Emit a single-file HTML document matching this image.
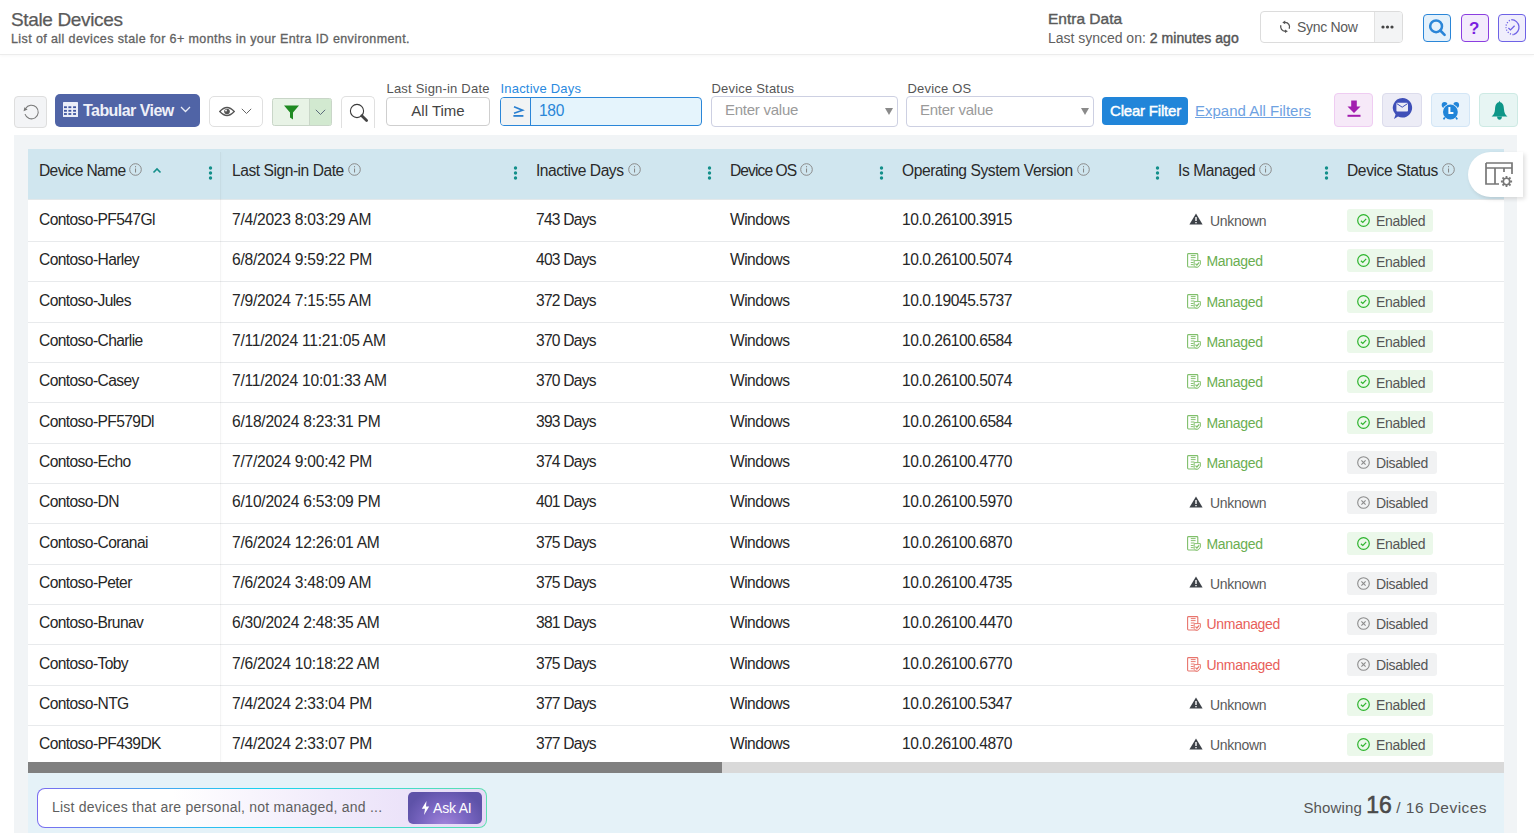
<!DOCTYPE html>
<html><head><meta charset="utf-8">
<style>
*{box-sizing:border-box;}
html,body{margin:0;padding:0;}
body{width:1534px;height:833px;overflow:hidden;position:relative;background:#fff;font-family:"Liberation Sans",sans-serif;color:#333;}
.abs{position:absolute;}
/* header */
#hdr{position:absolute;left:0;top:0;width:1534px;height:55px;background:#fff;border-bottom:1px solid #ececec;box-shadow:0 1px 3px rgba(0,0,0,0.035);}
#title{position:absolute;left:11px;top:9px;font-size:19px;color:#5a5a5a;letter-spacing:-0.35px;-webkit-text-stroke:0.25px #5a5a5a;white-space:nowrap;}
#sub{position:absolute;left:11px;top:31.5px;font-size:12.5px;color:#626262;letter-spacing:0.4px;-webkit-text-stroke:0.3px #626262;white-space:nowrap;}
#entra{position:absolute;left:1048px;top:9.5px;font-size:15.5px;color:#5a5a5a;-webkit-text-stroke:0.4px #5a5a5a;white-space:nowrap;}
#synced{position:absolute;left:1048px;top:29.5px;font-size:14px;color:#606060;white-space:nowrap;letter-spacing:-0.02px;}
#synced b{font-weight:normal;color:#555;-webkit-text-stroke:0.4px #555;letter-spacing:0.1px;}
#sync{position:absolute;left:1260px;top:11px;width:143px;height:32px;border:1px solid #dcdcdc;border-radius:4px;background:#fff;overflow:hidden;}
#sync .lbl{position:absolute;left:36px;top:7px;font-size:14px;color:#5a5a5a;letter-spacing:-0.3px;}
#sync .more{position:absolute;left:113px;top:0;width:28px;height:30px;background:#f3f4f5;border-left:1px solid #e2e2e2;}
.hbtn{position:absolute;top:14px;width:28px;height:28px;border-radius:4px;}
/* toolbar */
.tb{position:absolute;}
.flabel{position:absolute;top:80.5px;font-size:13px;color:#555;white-space:nowrap;letter-spacing:0.2px;margin-left:0.5px;}
/* container */
#cont{position:absolute;left:14px;top:135px;width:1503px;height:698px;background:#f1f4f6;}
#thead{position:absolute;left:28px;top:149px;width:1476px;height:51px;background:#d0e6ef;border-bottom:1px solid #e3e8ea;}
.hc{position:absolute;top:157.5px;height:24px;display:flex;align-items:center;white-space:nowrap;}
.ht{font-size:15.6px;color:#2a2a2a;position:relative;top:1.5px;}
.info{margin-left:4px;position:relative;top:-0.5px;}
.sort{margin-left:9.5px;position:relative;top:0.5px;}
.keb{position:absolute;top:165.8px;height:14px;}
#tbody{position:absolute;left:28px;top:200px;width:1476px;height:562px;background:#fff;overflow:hidden;}
.row{position:absolute;left:0;width:1476px;height:40.33px;border-bottom:1px solid #e8eaec;}
.c{position:absolute;top:9.2px;font-size:15.6px;color:#262626;white-space:nowrap;}
.man{position:absolute;top:11.3px;display:flex;align-items:center;white-space:nowrap;font-size:14px;letter-spacing:-0.3px;}
.man span{margin-left:4.5px;}
.unk{color:#5a5a5a;}
.unk span{margin-left:7px;}
.mgd{color:#6aae50;}
.mgd svg,.umg svg{margin-top:-1px;}
.umg{color:#e8605a;}
.badge{position:absolute;top:7.3px;height:23px;border-radius:3px;display:flex;align-items:center;padding-left:10px;font-size:14px;color:#555;white-space:nowrap;letter-spacing:-0.3px;}
.badge span{margin-left:6px;margin-top:1.4px;}
.en{background:#ebf8ea;width:86px;}
.dis{background:#f1f2f3;width:90px;}
#col1shadow{position:absolute;left:220px;top:152px;width:1px;height:610px;background:rgba(0,0,0,0.045);box-shadow:1px 0 3px rgba(0,0,0,0.03);}
#sbar{position:absolute;left:28px;top:762px;width:1476px;height:11px;background:#d9d9d9;}
#sthumb{position:absolute;left:0;top:0;width:694px;height:11px;background:#808080;}
#foot{position:absolute;left:28px;top:773px;width:1476px;height:60px;background:#e5f2f8;}
</style></head>
<body>
<div id="hdr">
  <div id="title">Stale Devices</div>
  <div id="sub">List of all devices stale for 6+ months in your Entra ID environment.</div>
  <div id="entra">Entra Data</div>
  <div id="synced">Last synced on: <b>2 minutes ago</b></div>
  <div id="sync">
    <svg class="abs" style="left:18px;top:8px" width="13" height="14" viewBox="0 0 13 14"><path d="M5.9 2.35 A4.5 4.5 0 0 1 10.2 8.7" fill="none" stroke="#555" stroke-width="1.35"/><path d="M3.3 2.4 L6.2 0.6 L6.2 4.2 Z" fill="#555"/><path d="M1.87 5.26 A4.5 4.5 0 0 0 6.3 11.25" fill="none" stroke="#555" stroke-width="1.35"/><path d="M8.9 11.2 L6 9.4 L6 13 Z" fill="#555"/></svg>
    <div class="lbl">Sync Now</div>
    <div class="more"><svg class="abs" style="left:6px;top:13px" width="13" height="4" viewBox="0 0 13 4"><circle cx="2" cy="2" r="1.6" fill="#444"/><circle cx="6.5" cy="2" r="1.6" fill="#444"/><circle cx="11" cy="2" r="1.6" fill="#444"/></svg></div>
  </div>
  <div class="hbtn" style="left:1423px;border:1.5px solid #2a86d8;background:#e4f1fb;">
    <svg class="abs" style="left:5px;top:4px" width="18" height="19" viewBox="0 0 18 19"><circle cx="7.1" cy="7.3" r="5.9" fill="none" stroke="#2a86d8" stroke-width="2.5"/><path d="M11.3 11.5 L15.6 15.8" stroke="#2a86d8" stroke-width="2.6" stroke-linecap="round"/></svg>
  </div>
  <div class="hbtn" style="left:1461px;border:1.5px solid #8b3ee0;background:#f3ebfc;">
    <div class="abs" style="left:7px;top:3.5px;font-size:17px;font-weight:bold;color:#7a1fe0;">?</div>
  </div>
  <div class="hbtn" style="left:1498px;border:1.5px solid #6e62e6;background:#f0eefc;">
    <svg class="abs" style="left:4px;top:4px" width="18" height="18" viewBox="0 0 18 18"><path d="M8.5 0.7 A7.6 7.6 0 0 1 10.5 15.6" fill="none" stroke="#6e62e6" stroke-width="1.3"/><path d="M10.5 15.6 A7.6 7.6 0 0 1 8.5 0.7" fill="none" stroke="#6e62e6" stroke-width="1.3" stroke-dasharray="1.1 1.5"/><path d="M5.4 9 L7.5 10.9 L11.6 6.8" fill="none" stroke="#6e62e6" stroke-width="1.3"/></svg>
  </div>
</div>

<!-- toolbar -->
<div class="tb" style="left:14px;top:96px;width:33px;height:32px;border:1px solid #dedede;border-radius:4px;background:#f3f4f6;">
  <svg class="abs" style="left:7px;top:6px" width="18" height="18" viewBox="0 0 18 18"><path d="M3.6 5.6 A6.8 6.8 0 1 1 3 11.2" fill="none" stroke="#777" stroke-width="1.05"/><path d="M1.6 8.2 L2.4 4.2 L5.6 6.6 Z" fill="#777"/></svg>
</div>
<div class="tb" style="left:55px;top:94px;width:145px;height:33px;border-radius:5px;background:#5064a6;">
  <svg class="abs" style="left:8px;top:8px" width="15" height="15" viewBox="0 0 15 15"><rect x="0" y="0" width="15" height="15" rx="0.6" fill="#eaedf8"/><rect x="1.0" y="4.3" width="2.9" height="1.8" fill="#3f55a0"/><rect x="5.4" y="4.3" width="2.9" height="1.8" fill="#3f55a0"/><rect x="10.1" y="4.3" width="2.9" height="1.8" fill="#3f55a0"/><rect x="1.0" y="7.9" width="2.9" height="1.8" fill="#3f55a0"/><rect x="5.4" y="7.9" width="2.9" height="1.8" fill="#3f55a0"/><rect x="10.1" y="7.9" width="2.9" height="1.8" fill="#3f55a0"/><rect x="1.0" y="11.1" width="2.9" height="1.8" fill="#3f55a0"/><rect x="5.4" y="11.1" width="2.9" height="1.8" fill="#3f55a0"/><rect x="10.1" y="11.1" width="2.9" height="1.8" fill="#3f55a0"/></svg>
  <div class="abs" style="left:28px;top:8px;font-size:16px;font-weight:bold;color:#eef0f8;white-space:nowrap;letter-spacing:-0.55px;">Tabular View</div>
  <svg class="abs" style="left:125px;top:12px" width="11" height="7" viewBox="0 0 11 7"><path d="M1 1 L5.5 5.5 L10 1" fill="none" stroke="#e8ecf6" stroke-width="1.3"/></svg>
</div>
<div class="tb" style="left:209px;top:96px;width:54px;height:31px;border:1px solid #e0e0e0;border-radius:5px;background:#fff;">
  <svg class="abs" style="left:9px;top:9px" width="16" height="11" viewBox="0 0 16 11"><path d="M0.8 5.5 Q8 -2.5 15.2 5.5 Q8 13.5 0.8 5.5 Z" fill="none" stroke="#555" stroke-width="1.4"/><circle cx="8" cy="5.5" r="2.8" fill="#555"/><circle cx="7" cy="4.5" r="0.9" fill="#fff"/></svg>
  <svg class="abs" style="left:30.5px;top:11px" width="11" height="7" viewBox="0 0 11 7"><path d="M0.8 0.8 L5.5 5.5 L10.2 0.8" fill="none" stroke="#666" stroke-width="1"/></svg>
</div>
<div class="tb" style="left:272px;top:98px;width:60px;height:28px;border:1px solid #c9d6c8;border-radius:2.5px;background:#e8f3e6;overflow:hidden;">
  <div class="abs" style="left:36px;top:0;width:24px;height:28px;background:#d2e9d0;border-left:1px solid #c9d6c8;"></div>
  <svg class="abs" style="left:11px;top:6px" width="15" height="15" viewBox="0 0 15 15"><path d="M0 0.5 H15 L9 7.5 V14.5 L6 12.5 V7.5 Z" fill="#1f8a22"/></svg>
  <svg class="abs" style="left:42px;top:9.5px" width="11" height="7" viewBox="0 0 11 7"><path d="M0.8 0.8 L5.5 5.5 L10.2 0.8" fill="none" stroke="#5a6a7a" stroke-width="1"/></svg>
</div>
<div class="tb" style="left:341px;top:96px;width:34px;height:32px;border:1px solid #e0e0e0;border-bottom:none;border-radius:5px 5px 0 0;background:#fff;">
  <svg class="abs" style="left:6px;top:5px" width="22" height="22" viewBox="0 0 22 22"><circle cx="9" cy="9" r="6.6" fill="none" stroke="#3a3a3a" stroke-width="1.1"/><path d="M13.8 13.8 L18.6 18.6" stroke="#444" stroke-width="2.8" stroke-linecap="round"/></svg>
</div>

<div class="flabel" style="left:386px;">Last Sign-in Date</div>
<div class="tb" style="left:386px;top:97px;width:104px;height:29px;border:1px solid #cfcfcf;border-radius:4px;background:#fff;">
  <div class="abs" style="left:0;width:102px;top:4px;text-align:center;font-size:15px;color:#444;">All Time</div>
</div>
<div class="flabel" style="left:500px;color:#2a8ae0;">Inactive Days</div>
<div class="tb" style="left:500px;top:97px;width:202px;height:29px;border:1px solid #2a86d8;border-radius:4px;background:#e5f4fc;overflow:hidden;">
  <div class="abs" style="left:0;top:0;width:30px;height:27px;background:#f1f3f4;border-right:1px solid #2a86d8;"></div>
  <svg class="abs" style="left:11.5px;top:8px" width="12" height="11" viewBox="0 0 12 11"><path d="M1 0.8 L9.6 4.3 L1 7.2" fill="none" stroke="#2a7fd0" stroke-width="1.6"/><rect x="0.4" y="9" width="10" height="1.8" fill="#2a7fd0"/></svg>
  <div class="abs" style="left:38px;top:3.5px;font-size:15.6px;color:#2a86d8;letter-spacing:-0.3px;">180</div>
</div>
<div class="flabel" style="left:711px;">Device Status</div>
<div class="tb" style="left:711px;top:96px;width:187px;height:31px;border:1px solid #cdd0e2;border-radius:4px;background:#fff;">
  <div class="abs" style="left:13px;top:4px;font-size:15px;color:#9a9a9a;letter-spacing:-0.25px;">Enter value</div>
  <svg class="abs" style="left:173px;top:11px" width="8" height="7" viewBox="0 0 8 7"><path d="M0 0 H8 L4 7 Z" fill="#8a8a8a"/></svg>
</div>
<div class="flabel" style="left:907px;">Device OS</div>
<div class="tb" style="left:906px;top:96px;width:188px;height:31px;border:1px solid #cdd0e2;border-radius:4px;background:#fff;">
  <div class="abs" style="left:13px;top:4px;font-size:15px;color:#9a9a9a;letter-spacing:-0.25px;">Enter value</div>
  <svg class="abs" style="left:174px;top:11px" width="8" height="7" viewBox="0 0 8 7"><path d="M0 0 H8 L4 7 Z" fill="#8a8a8a"/></svg>
</div>
<div class="tb" style="left:1102px;top:97px;width:86px;height:28px;border-radius:4px;background:#2185d9;">
  <div class="abs" style="left:8px;top:4.5px;font-size:15px;color:#fff;white-space:nowrap;letter-spacing:-0.2px;-webkit-text-stroke:0.45px #fff;">Clear Filter</div>
</div>
<div class="tb" style="left:1195px;top:102px;font-size:15px;color:#6ea2e2;text-decoration:underline;white-space:nowrap;">Expand All Filters</div>

<div class="tb" style="left:1334px;top:93px;width:39px;height:34px;border:1px solid #efccf2;border-radius:4px;background:#f6e9f8;">
  <svg class="abs" style="left:11px;top:6.3px" width="16" height="18" viewBox="0 0 16 18"><path d="M5.2 0.5 H10.8 V6.5 H14.5 L8 13 L1.5 6.5 H5.2 Z" fill="#a21caf"/><rect x="1.5" y="14.8" width="13" height="2" fill="#a21caf"/></svg>
</div>
<div class="tb" style="left:1382px;top:93px;width:40px;height:34px;border:1px solid #dcdcec;border-radius:4px;background:#ececf6;">
  <svg class="abs" style="left:8px;top:3.3px" width="22" height="22" viewBox="0 0 22 22"><path d="M11.5 1 A9.8 9.8 0 1 1 7 19.6 L3 22 L4.6 17.6 A9.8 9.8 0 0 1 11.5 1 Z" fill="#3f4fb8"/><rect x="5.4" y="5.8" width="11.6" height="8.6" rx="1" fill="#ebebf5"/><path d="M5.8 6.6 L11.2 10.2 L16.6 6.6" fill="none" stroke="#3f4fb8" stroke-width="1"/></svg>
</div>
<div class="tb" style="left:1431px;top:93px;width:39px;height:34px;border:1px solid #d3e6f6;border-radius:4px;background:#e9f3fb;">
  <svg class="abs" style="left:8.6px;top:6.5px" width="20" height="20" viewBox="0 0 20 20"><circle cx="3.6" cy="4" r="2.9" fill="#2185d9"/><circle cx="15.2" cy="4" r="2.9" fill="#2185d9"/><circle cx="9.4" cy="11" r="8.3" fill="#e9f3fb"/><circle cx="9.4" cy="11" r="7.4" fill="#2185d9"/><path d="M8.4 6 V11.9 H12.4" fill="none" stroke="#fff" stroke-width="2"/><path d="M3.8 16.4 L2.6 18.4 M15 16.4 L16.2 18.4" stroke="#2185d9" stroke-width="1.8"/></svg>
</div>
<div class="tb" style="left:1479px;top:93px;width:39px;height:34px;border:1px solid #cdeae4;border-radius:4px;background:#e7f5f3;">
  <svg class="abs" style="left:11px;top:6px" width="17" height="21" viewBox="0 0 17 21"><path d="M8.5 0.8 L9.2 2.2 C12.2 2.8 12.8 6 13 9.5 C13.2 13 14.4 14.8 16.5 16.6 H0.5 C2.6 14.8 3.8 13 4 9.5 C4.2 6 4.8 2.8 7.8 2.2 Z" fill="#0e9688"/><path d="M6 16.4 Q6.4 19.6 8.5 19.8 Q10.6 19.6 11 16.4 Z" fill="#0e9688"/></svg>
</div>

<!-- table container -->
<div id="cont"></div>
<div id="thead"></div>
<div class="hc" style="left:39px"><span class="ht" style="letter-spacing:-0.65px">Device Name</span><svg class="info" width="13" height="13" viewBox="0 0 13 13"><circle cx="6.5" cy="6.5" r="5.8" fill="none" stroke="#8a8a8a" stroke-width="1"/><rect x="6" y="5.5" width="1.05" height="4" fill="#888"/><rect x="6" y="3.1" width="1.05" height="1.2" fill="#888"/></svg><svg class="sort" width="10" height="7" viewBox="0 0 10 7"><path d="M1.5 5.5 L5 2 L8.5 5.5" fill="none" stroke="#138f8a" stroke-width="1.6"/></svg></div>
<div class="keb" style="left:208px"><svg width="5" height="14" viewBox="0 0 5 14"><circle cx="2.5" cy="2" r="1.7" fill="#138f8a"/><circle cx="2.5" cy="7" r="1.7" fill="#138f8a"/><circle cx="2.5" cy="12" r="1.7" fill="#138f8a"/></svg></div>
<div class="hc" style="left:232px"><span class="ht" style="letter-spacing:-0.46px">Last Sign-in Date</span><svg class="info" width="13" height="13" viewBox="0 0 13 13"><circle cx="6.5" cy="6.5" r="5.8" fill="none" stroke="#8a8a8a" stroke-width="1"/><rect x="6" y="5.5" width="1.05" height="4" fill="#888"/><rect x="6" y="3.1" width="1.05" height="1.2" fill="#888"/></svg></div>
<div class="keb" style="left:513px"><svg width="5" height="14" viewBox="0 0 5 14"><circle cx="2.5" cy="2" r="1.7" fill="#138f8a"/><circle cx="2.5" cy="7" r="1.7" fill="#138f8a"/><circle cx="2.5" cy="12" r="1.7" fill="#138f8a"/></svg></div>
<div class="hc" style="left:536px"><span class="ht" style="letter-spacing:-0.47px">Inactive Days</span><svg class="info" width="13" height="13" viewBox="0 0 13 13"><circle cx="6.5" cy="6.5" r="5.8" fill="none" stroke="#8a8a8a" stroke-width="1"/><rect x="6" y="5.5" width="1.05" height="4" fill="#888"/><rect x="6" y="3.1" width="1.05" height="1.2" fill="#888"/></svg></div>
<div class="keb" style="left:707px"><svg width="5" height="14" viewBox="0 0 5 14"><circle cx="2.5" cy="2" r="1.7" fill="#138f8a"/><circle cx="2.5" cy="7" r="1.7" fill="#138f8a"/><circle cx="2.5" cy="12" r="1.7" fill="#138f8a"/></svg></div>
<div class="hc" style="left:730px"><span class="ht" style="letter-spacing:-0.92px">Device OS</span><svg class="info" width="13" height="13" viewBox="0 0 13 13"><circle cx="6.5" cy="6.5" r="5.8" fill="none" stroke="#8a8a8a" stroke-width="1"/><rect x="6" y="5.5" width="1.05" height="4" fill="#888"/><rect x="6" y="3.1" width="1.05" height="1.2" fill="#888"/></svg></div>
<div class="keb" style="left:879px"><svg width="5" height="14" viewBox="0 0 5 14"><circle cx="2.5" cy="2" r="1.7" fill="#138f8a"/><circle cx="2.5" cy="7" r="1.7" fill="#138f8a"/><circle cx="2.5" cy="12" r="1.7" fill="#138f8a"/></svg></div>
<div class="hc" style="left:902px"><span class="ht" style="letter-spacing:-0.43px">Operating System Version</span><svg class="info" width="13" height="13" viewBox="0 0 13 13"><circle cx="6.5" cy="6.5" r="5.8" fill="none" stroke="#8a8a8a" stroke-width="1"/><rect x="6" y="5.5" width="1.05" height="4" fill="#888"/><rect x="6" y="3.1" width="1.05" height="1.2" fill="#888"/></svg></div>
<div class="keb" style="left:1155px"><svg width="5" height="14" viewBox="0 0 5 14"><circle cx="2.5" cy="2" r="1.7" fill="#138f8a"/><circle cx="2.5" cy="7" r="1.7" fill="#138f8a"/><circle cx="2.5" cy="12" r="1.7" fill="#138f8a"/></svg></div>
<div class="hc" style="left:1178px"><span class="ht" style="letter-spacing:-0.42px">Is Managed</span><svg class="info" width="13" height="13" viewBox="0 0 13 13"><circle cx="6.5" cy="6.5" r="5.8" fill="none" stroke="#8a8a8a" stroke-width="1"/><rect x="6" y="5.5" width="1.05" height="4" fill="#888"/><rect x="6" y="3.1" width="1.05" height="1.2" fill="#888"/></svg></div>
<div class="keb" style="left:1324px"><svg width="5" height="14" viewBox="0 0 5 14"><circle cx="2.5" cy="2" r="1.7" fill="#138f8a"/><circle cx="2.5" cy="7" r="1.7" fill="#138f8a"/><circle cx="2.5" cy="12" r="1.7" fill="#138f8a"/></svg></div>
<div class="hc" style="left:1347px"><span class="ht" style="letter-spacing:-0.4px">Device Status</span><svg class="info" width="13" height="13" viewBox="0 0 13 13"><circle cx="6.5" cy="6.5" r="5.8" fill="none" stroke="#8a8a8a" stroke-width="1"/><rect x="6" y="5.5" width="1.05" height="4" fill="#888"/><rect x="6" y="3.1" width="1.05" height="1.2" fill="#888"/></svg></div>
<div id="tbody">
<div class="row" style="top:1.70px">
<div class="c" style="left:11px;letter-spacing:-0.6px">Contoso-PF547Gl</div>
<div class="c" style="left:204px;letter-spacing:-0.25px">7/4/2023 8:03:29 AM</div>
<div class="c" style="left:508px;letter-spacing:-0.75px">743 Days</div>
<div class="c" style="left:702px;letter-spacing:-0.53px">Windows</div>
<div class="c" style="left:874px;letter-spacing:-0.47px">10.0.26100.3915</div>
<div class="man unk" style="left:1161px"><svg width="14" height="12" viewBox="0 0 14 12" style="margin-top:-3px"><path d="M7 0.5 L13.6 11.5 L0.4 11.5 Z" fill="#3d4248"/><rect x="6.3" y="4" width="1.4" height="4" fill="#fff"/><rect x="6.3" y="9" width="1.4" height="1.3" fill="#fff"/></svg><span>Unknown</span></div>
<div class="badge en" style="left:1319px"><svg width="13" height="13" viewBox="0 0 13 13"><circle cx="6.5" cy="6.5" r="5.8" fill="none" stroke="#2db42d" stroke-width="1.2"/><path d="M3.9 6.7 L5.8 8.5 L9.2 4.8" fill="none" stroke="#2db42d" stroke-width="1.2"/></svg><span>Enabled</span></div>
</div>
<div class="row" style="top:42.03px">
<div class="c" style="left:11px;letter-spacing:-0.6px">Contoso-Harley</div>
<div class="c" style="left:204px;letter-spacing:-0.25px">6/8/2024 9:59:22 PM</div>
<div class="c" style="left:508px;letter-spacing:-0.75px">403 Days</div>
<div class="c" style="left:702px;letter-spacing:-0.53px">Windows</div>
<div class="c" style="left:874px;letter-spacing:-0.47px">10.0.26100.5074</div>
<div class="man mgd" style="left:1159px"><svg width="15" height="15" viewBox="0 0 15 15"><rect x="0.6" y="0.6" width="10.2" height="13.4" rx="0.9" fill="none" stroke="#7fbf6a" stroke-width="1.1"/><path d="M3.8 2.6 H8.6 M3.8 4.6 H8.6 M3.8 7 H7.4 M3.8 9.5 H6.6 M3.8 11.6 H6.6" stroke="#7fbf6a" stroke-width="0.95"/><path d="M7.2 7.6 H13.4 V11.2 L11.2 14.1 H8.6 L7.2 12.6 Z" fill="#fff" stroke="#7fbf6a" stroke-width="0.95"/><path d="M8.5 10.6 L9.9 12 L12.2 9.4" stroke="#7fbf6a" stroke-width="1.2" fill="none"/></svg><span>Managed</span></div>
<div class="badge en" style="left:1319px"><svg width="13" height="13" viewBox="0 0 13 13"><circle cx="6.5" cy="6.5" r="5.8" fill="none" stroke="#2db42d" stroke-width="1.2"/><path d="M3.9 6.7 L5.8 8.5 L9.2 4.8" fill="none" stroke="#2db42d" stroke-width="1.2"/></svg><span>Enabled</span></div>
</div>
<div class="row" style="top:82.36px">
<div class="c" style="left:11px;letter-spacing:-0.6px">Contoso-Jules</div>
<div class="c" style="left:204px;letter-spacing:-0.25px">7/9/2024 7:15:55 AM</div>
<div class="c" style="left:508px;letter-spacing:-0.75px">372 Days</div>
<div class="c" style="left:702px;letter-spacing:-0.53px">Windows</div>
<div class="c" style="left:874px;letter-spacing:-0.47px">10.0.19045.5737</div>
<div class="man mgd" style="left:1159px"><svg width="15" height="15" viewBox="0 0 15 15"><rect x="0.6" y="0.6" width="10.2" height="13.4" rx="0.9" fill="none" stroke="#7fbf6a" stroke-width="1.1"/><path d="M3.8 2.6 H8.6 M3.8 4.6 H8.6 M3.8 7 H7.4 M3.8 9.5 H6.6 M3.8 11.6 H6.6" stroke="#7fbf6a" stroke-width="0.95"/><path d="M7.2 7.6 H13.4 V11.2 L11.2 14.1 H8.6 L7.2 12.6 Z" fill="#fff" stroke="#7fbf6a" stroke-width="0.95"/><path d="M8.5 10.6 L9.9 12 L12.2 9.4" stroke="#7fbf6a" stroke-width="1.2" fill="none"/></svg><span>Managed</span></div>
<div class="badge en" style="left:1319px"><svg width="13" height="13" viewBox="0 0 13 13"><circle cx="6.5" cy="6.5" r="5.8" fill="none" stroke="#2db42d" stroke-width="1.2"/><path d="M3.9 6.7 L5.8 8.5 L9.2 4.8" fill="none" stroke="#2db42d" stroke-width="1.2"/></svg><span>Enabled</span></div>
</div>
<div class="row" style="top:122.69px">
<div class="c" style="left:11px;letter-spacing:-0.6px">Contoso-Charlie</div>
<div class="c" style="left:204px;letter-spacing:-0.25px">7/11/2024 11:21:05 AM</div>
<div class="c" style="left:508px;letter-spacing:-0.75px">370 Days</div>
<div class="c" style="left:702px;letter-spacing:-0.53px">Windows</div>
<div class="c" style="left:874px;letter-spacing:-0.47px">10.0.26100.6584</div>
<div class="man mgd" style="left:1159px"><svg width="15" height="15" viewBox="0 0 15 15"><rect x="0.6" y="0.6" width="10.2" height="13.4" rx="0.9" fill="none" stroke="#7fbf6a" stroke-width="1.1"/><path d="M3.8 2.6 H8.6 M3.8 4.6 H8.6 M3.8 7 H7.4 M3.8 9.5 H6.6 M3.8 11.6 H6.6" stroke="#7fbf6a" stroke-width="0.95"/><path d="M7.2 7.6 H13.4 V11.2 L11.2 14.1 H8.6 L7.2 12.6 Z" fill="#fff" stroke="#7fbf6a" stroke-width="0.95"/><path d="M8.5 10.6 L9.9 12 L12.2 9.4" stroke="#7fbf6a" stroke-width="1.2" fill="none"/></svg><span>Managed</span></div>
<div class="badge en" style="left:1319px"><svg width="13" height="13" viewBox="0 0 13 13"><circle cx="6.5" cy="6.5" r="5.8" fill="none" stroke="#2db42d" stroke-width="1.2"/><path d="M3.9 6.7 L5.8 8.5 L9.2 4.8" fill="none" stroke="#2db42d" stroke-width="1.2"/></svg><span>Enabled</span></div>
</div>
<div class="row" style="top:163.02px">
<div class="c" style="left:11px;letter-spacing:-0.6px">Contoso-Casey</div>
<div class="c" style="left:204px;letter-spacing:-0.25px">7/11/2024 10:01:33 AM</div>
<div class="c" style="left:508px;letter-spacing:-0.75px">370 Days</div>
<div class="c" style="left:702px;letter-spacing:-0.53px">Windows</div>
<div class="c" style="left:874px;letter-spacing:-0.47px">10.0.26100.5074</div>
<div class="man mgd" style="left:1159px"><svg width="15" height="15" viewBox="0 0 15 15"><rect x="0.6" y="0.6" width="10.2" height="13.4" rx="0.9" fill="none" stroke="#7fbf6a" stroke-width="1.1"/><path d="M3.8 2.6 H8.6 M3.8 4.6 H8.6 M3.8 7 H7.4 M3.8 9.5 H6.6 M3.8 11.6 H6.6" stroke="#7fbf6a" stroke-width="0.95"/><path d="M7.2 7.6 H13.4 V11.2 L11.2 14.1 H8.6 L7.2 12.6 Z" fill="#fff" stroke="#7fbf6a" stroke-width="0.95"/><path d="M8.5 10.6 L9.9 12 L12.2 9.4" stroke="#7fbf6a" stroke-width="1.2" fill="none"/></svg><span>Managed</span></div>
<div class="badge en" style="left:1319px"><svg width="13" height="13" viewBox="0 0 13 13"><circle cx="6.5" cy="6.5" r="5.8" fill="none" stroke="#2db42d" stroke-width="1.2"/><path d="M3.9 6.7 L5.8 8.5 L9.2 4.8" fill="none" stroke="#2db42d" stroke-width="1.2"/></svg><span>Enabled</span></div>
</div>
<div class="row" style="top:203.35px">
<div class="c" style="left:11px;letter-spacing:-0.6px">Contoso-PF579Dl</div>
<div class="c" style="left:204px;letter-spacing:-0.25px">6/18/2024 8:23:31 PM</div>
<div class="c" style="left:508px;letter-spacing:-0.75px">393 Days</div>
<div class="c" style="left:702px;letter-spacing:-0.53px">Windows</div>
<div class="c" style="left:874px;letter-spacing:-0.47px">10.0.26100.6584</div>
<div class="man mgd" style="left:1159px"><svg width="15" height="15" viewBox="0 0 15 15"><rect x="0.6" y="0.6" width="10.2" height="13.4" rx="0.9" fill="none" stroke="#7fbf6a" stroke-width="1.1"/><path d="M3.8 2.6 H8.6 M3.8 4.6 H8.6 M3.8 7 H7.4 M3.8 9.5 H6.6 M3.8 11.6 H6.6" stroke="#7fbf6a" stroke-width="0.95"/><path d="M7.2 7.6 H13.4 V11.2 L11.2 14.1 H8.6 L7.2 12.6 Z" fill="#fff" stroke="#7fbf6a" stroke-width="0.95"/><path d="M8.5 10.6 L9.9 12 L12.2 9.4" stroke="#7fbf6a" stroke-width="1.2" fill="none"/></svg><span>Managed</span></div>
<div class="badge en" style="left:1319px"><svg width="13" height="13" viewBox="0 0 13 13"><circle cx="6.5" cy="6.5" r="5.8" fill="none" stroke="#2db42d" stroke-width="1.2"/><path d="M3.9 6.7 L5.8 8.5 L9.2 4.8" fill="none" stroke="#2db42d" stroke-width="1.2"/></svg><span>Enabled</span></div>
</div>
<div class="row" style="top:243.68px">
<div class="c" style="left:11px;letter-spacing:-0.6px">Contoso-Echo</div>
<div class="c" style="left:204px;letter-spacing:-0.25px">7/7/2024 9:00:42 PM</div>
<div class="c" style="left:508px;letter-spacing:-0.75px">374 Days</div>
<div class="c" style="left:702px;letter-spacing:-0.53px">Windows</div>
<div class="c" style="left:874px;letter-spacing:-0.47px">10.0.26100.4770</div>
<div class="man mgd" style="left:1159px"><svg width="15" height="15" viewBox="0 0 15 15"><rect x="0.6" y="0.6" width="10.2" height="13.4" rx="0.9" fill="none" stroke="#7fbf6a" stroke-width="1.1"/><path d="M3.8 2.6 H8.6 M3.8 4.6 H8.6 M3.8 7 H7.4 M3.8 9.5 H6.6 M3.8 11.6 H6.6" stroke="#7fbf6a" stroke-width="0.95"/><path d="M7.2 7.6 H13.4 V11.2 L11.2 14.1 H8.6 L7.2 12.6 Z" fill="#fff" stroke="#7fbf6a" stroke-width="0.95"/><path d="M8.5 10.6 L9.9 12 L12.2 9.4" stroke="#7fbf6a" stroke-width="1.2" fill="none"/></svg><span>Managed</span></div>
<div class="badge dis" style="left:1319px"><svg width="13" height="13" viewBox="0 0 13 13"><circle cx="6.5" cy="6.5" r="5.8" fill="none" stroke="#8c8c8c" stroke-width="1.1"/><path d="M4.4 4.4 L8.6 8.6 M8.6 4.4 L4.4 8.6" fill="none" stroke="#8c8c8c" stroke-width="1.1"/></svg><span>Disabled</span></div>
</div>
<div class="row" style="top:284.01px">
<div class="c" style="left:11px;letter-spacing:-0.6px">Contoso-DN</div>
<div class="c" style="left:204px;letter-spacing:-0.25px">6/10/2024 6:53:09 PM</div>
<div class="c" style="left:508px;letter-spacing:-0.75px">401 Days</div>
<div class="c" style="left:702px;letter-spacing:-0.53px">Windows</div>
<div class="c" style="left:874px;letter-spacing:-0.47px">10.0.26100.5970</div>
<div class="man unk" style="left:1161px"><svg width="14" height="12" viewBox="0 0 14 12" style="margin-top:-3px"><path d="M7 0.5 L13.6 11.5 L0.4 11.5 Z" fill="#3d4248"/><rect x="6.3" y="4" width="1.4" height="4" fill="#fff"/><rect x="6.3" y="9" width="1.4" height="1.3" fill="#fff"/></svg><span>Unknown</span></div>
<div class="badge dis" style="left:1319px"><svg width="13" height="13" viewBox="0 0 13 13"><circle cx="6.5" cy="6.5" r="5.8" fill="none" stroke="#8c8c8c" stroke-width="1.1"/><path d="M4.4 4.4 L8.6 8.6 M8.6 4.4 L4.4 8.6" fill="none" stroke="#8c8c8c" stroke-width="1.1"/></svg><span>Disabled</span></div>
</div>
<div class="row" style="top:324.34px">
<div class="c" style="left:11px;letter-spacing:-0.6px">Contoso-Coranai</div>
<div class="c" style="left:204px;letter-spacing:-0.25px">7/6/2024 12:26:01 AM</div>
<div class="c" style="left:508px;letter-spacing:-0.75px">375 Days</div>
<div class="c" style="left:702px;letter-spacing:-0.53px">Windows</div>
<div class="c" style="left:874px;letter-spacing:-0.47px">10.0.26100.6870</div>
<div class="man mgd" style="left:1159px"><svg width="15" height="15" viewBox="0 0 15 15"><rect x="0.6" y="0.6" width="10.2" height="13.4" rx="0.9" fill="none" stroke="#7fbf6a" stroke-width="1.1"/><path d="M3.8 2.6 H8.6 M3.8 4.6 H8.6 M3.8 7 H7.4 M3.8 9.5 H6.6 M3.8 11.6 H6.6" stroke="#7fbf6a" stroke-width="0.95"/><path d="M7.2 7.6 H13.4 V11.2 L11.2 14.1 H8.6 L7.2 12.6 Z" fill="#fff" stroke="#7fbf6a" stroke-width="0.95"/><path d="M8.5 10.6 L9.9 12 L12.2 9.4" stroke="#7fbf6a" stroke-width="1.2" fill="none"/></svg><span>Managed</span></div>
<div class="badge en" style="left:1319px"><svg width="13" height="13" viewBox="0 0 13 13"><circle cx="6.5" cy="6.5" r="5.8" fill="none" stroke="#2db42d" stroke-width="1.2"/><path d="M3.9 6.7 L5.8 8.5 L9.2 4.8" fill="none" stroke="#2db42d" stroke-width="1.2"/></svg><span>Enabled</span></div>
</div>
<div class="row" style="top:364.67px">
<div class="c" style="left:11px;letter-spacing:-0.6px">Contoso-Peter</div>
<div class="c" style="left:204px;letter-spacing:-0.25px">7/6/2024 3:48:09 AM</div>
<div class="c" style="left:508px;letter-spacing:-0.75px">375 Days</div>
<div class="c" style="left:702px;letter-spacing:-0.53px">Windows</div>
<div class="c" style="left:874px;letter-spacing:-0.47px">10.0.26100.4735</div>
<div class="man unk" style="left:1161px"><svg width="14" height="12" viewBox="0 0 14 12" style="margin-top:-3px"><path d="M7 0.5 L13.6 11.5 L0.4 11.5 Z" fill="#3d4248"/><rect x="6.3" y="4" width="1.4" height="4" fill="#fff"/><rect x="6.3" y="9" width="1.4" height="1.3" fill="#fff"/></svg><span>Unknown</span></div>
<div class="badge dis" style="left:1319px"><svg width="13" height="13" viewBox="0 0 13 13"><circle cx="6.5" cy="6.5" r="5.8" fill="none" stroke="#8c8c8c" stroke-width="1.1"/><path d="M4.4 4.4 L8.6 8.6 M8.6 4.4 L4.4 8.6" fill="none" stroke="#8c8c8c" stroke-width="1.1"/></svg><span>Disabled</span></div>
</div>
<div class="row" style="top:405.00px">
<div class="c" style="left:11px;letter-spacing:-0.6px">Contoso-Brunav</div>
<div class="c" style="left:204px;letter-spacing:-0.25px">6/30/2024 2:48:35 AM</div>
<div class="c" style="left:508px;letter-spacing:-0.75px">381 Days</div>
<div class="c" style="left:702px;letter-spacing:-0.53px">Windows</div>
<div class="c" style="left:874px;letter-spacing:-0.47px">10.0.26100.4470</div>
<div class="man umg" style="left:1159px"><svg width="15" height="15" viewBox="0 0 15 15"><rect x="0.6" y="0.6" width="10.2" height="13.4" rx="0.9" fill="none" stroke="#e8746c" stroke-width="1.1"/><path d="M3.8 2.6 H8.6 M3.8 4.6 H8.6 M3.8 7 H7.4 M3.8 9.5 H6.6 M3.8 11.6 H6.6" stroke="#e8746c" stroke-width="0.95"/><path d="M7.2 7.6 H13.4 V11.2 L11.2 14.1 H8.6 L7.2 12.6 Z" fill="#fff" stroke="#e8746c" stroke-width="0.95"/><path d="M8.5 10.6 L9.9 12 L12.2 9.4" stroke="#e8746c" stroke-width="1.2" fill="none"/></svg><span>Unmanaged</span></div>
<div class="badge dis" style="left:1319px"><svg width="13" height="13" viewBox="0 0 13 13"><circle cx="6.5" cy="6.5" r="5.8" fill="none" stroke="#8c8c8c" stroke-width="1.1"/><path d="M4.4 4.4 L8.6 8.6 M8.6 4.4 L4.4 8.6" fill="none" stroke="#8c8c8c" stroke-width="1.1"/></svg><span>Disabled</span></div>
</div>
<div class="row" style="top:445.33px">
<div class="c" style="left:11px;letter-spacing:-0.6px">Contoso-Toby</div>
<div class="c" style="left:204px;letter-spacing:-0.25px">7/6/2024 10:18:22 AM</div>
<div class="c" style="left:508px;letter-spacing:-0.75px">375 Days</div>
<div class="c" style="left:702px;letter-spacing:-0.53px">Windows</div>
<div class="c" style="left:874px;letter-spacing:-0.47px">10.0.26100.6770</div>
<div class="man umg" style="left:1159px"><svg width="15" height="15" viewBox="0 0 15 15"><rect x="0.6" y="0.6" width="10.2" height="13.4" rx="0.9" fill="none" stroke="#e8746c" stroke-width="1.1"/><path d="M3.8 2.6 H8.6 M3.8 4.6 H8.6 M3.8 7 H7.4 M3.8 9.5 H6.6 M3.8 11.6 H6.6" stroke="#e8746c" stroke-width="0.95"/><path d="M7.2 7.6 H13.4 V11.2 L11.2 14.1 H8.6 L7.2 12.6 Z" fill="#fff" stroke="#e8746c" stroke-width="0.95"/><path d="M8.5 10.6 L9.9 12 L12.2 9.4" stroke="#e8746c" stroke-width="1.2" fill="none"/></svg><span>Unmanaged</span></div>
<div class="badge dis" style="left:1319px"><svg width="13" height="13" viewBox="0 0 13 13"><circle cx="6.5" cy="6.5" r="5.8" fill="none" stroke="#8c8c8c" stroke-width="1.1"/><path d="M4.4 4.4 L8.6 8.6 M8.6 4.4 L4.4 8.6" fill="none" stroke="#8c8c8c" stroke-width="1.1"/></svg><span>Disabled</span></div>
</div>
<div class="row" style="top:485.66px">
<div class="c" style="left:11px;letter-spacing:-0.6px">Contoso-NTG</div>
<div class="c" style="left:204px;letter-spacing:-0.25px">7/4/2024 2:33:04 PM</div>
<div class="c" style="left:508px;letter-spacing:-0.75px">377 Days</div>
<div class="c" style="left:702px;letter-spacing:-0.53px">Windows</div>
<div class="c" style="left:874px;letter-spacing:-0.47px">10.0.26100.5347</div>
<div class="man unk" style="left:1161px"><svg width="14" height="12" viewBox="0 0 14 12" style="margin-top:-3px"><path d="M7 0.5 L13.6 11.5 L0.4 11.5 Z" fill="#3d4248"/><rect x="6.3" y="4" width="1.4" height="4" fill="#fff"/><rect x="6.3" y="9" width="1.4" height="1.3" fill="#fff"/></svg><span>Unknown</span></div>
<div class="badge en" style="left:1319px"><svg width="13" height="13" viewBox="0 0 13 13"><circle cx="6.5" cy="6.5" r="5.8" fill="none" stroke="#2db42d" stroke-width="1.2"/><path d="M3.9 6.7 L5.8 8.5 L9.2 4.8" fill="none" stroke="#2db42d" stroke-width="1.2"/></svg><span>Enabled</span></div>
</div>
<div class="row" style="top:525.99px">
<div class="c" style="left:11px;letter-spacing:-0.6px">Contoso-PF439DK</div>
<div class="c" style="left:204px;letter-spacing:-0.25px">7/4/2024 2:33:07 PM</div>
<div class="c" style="left:508px;letter-spacing:-0.75px">377 Days</div>
<div class="c" style="left:702px;letter-spacing:-0.53px">Windows</div>
<div class="c" style="left:874px;letter-spacing:-0.47px">10.0.26100.4870</div>
<div class="man unk" style="left:1161px"><svg width="14" height="12" viewBox="0 0 14 12" style="margin-top:-3px"><path d="M7 0.5 L13.6 11.5 L0.4 11.5 Z" fill="#3d4248"/><rect x="6.3" y="4" width="1.4" height="4" fill="#fff"/><rect x="6.3" y="9" width="1.4" height="1.3" fill="#fff"/></svg><span>Unknown</span></div>
<div class="badge en" style="left:1319px"><svg width="13" height="13" viewBox="0 0 13 13"><circle cx="6.5" cy="6.5" r="5.8" fill="none" stroke="#2db42d" stroke-width="1.2"/><path d="M3.9 6.7 L5.8 8.5 L9.2 4.8" fill="none" stroke="#2db42d" stroke-width="1.2"/></svg><span>Enabled</span></div>
</div>
</div>
<div id="col1shadow"></div>
<div id="sbar"><div id="sthumb"></div></div>
<div id="foot">
  <div class="abs" style="left:9px;top:15px;width:450px;height:40px;border-radius:8px;padding:1px;background:linear-gradient(90deg,#7b6cf0,#19d4f0 50%,#5fe0b0);">
    <div style="width:100%;height:100%;border-radius:7px;background:linear-gradient(90deg,#ffffff 0%,#ffffff 30%,#f1ebfb 65%,#e6daf7 100%);position:relative;">
      <div class="abs" style="left:14px;top:10px;font-size:14px;color:#5e5e5e;white-space:nowrap;letter-spacing:0.23px;">List devices that are personal, not managed, and ...</div>
      <div class="abs" style="left:370px;top:3px;width:74px;height:32px;border-radius:5px;background:radial-gradient(ellipse at 50% 110%,#a486dc 0%,#7a66c2 45%,#5e52a8 80%);">
        <svg class="abs" style="left:13px;top:9px" width="9" height="14" viewBox="0 0 9 14"><path d="M5.5 0 L0.8 7.8 H4 L3 14 L8.2 5.6 H5 Z" fill="#fff"/></svg>
        <div class="abs" style="left:25px;top:8px;font-size:14px;color:#fff;white-space:nowrap;letter-spacing:-0.2px;">Ask AI</div>
      </div>
    </div>
  </div>
  <div class="abs" style="right:17px;top:19px;white-space:nowrap;color:#555;"><span style="font-size:15px;letter-spacing:0.15px;">Showing </span><span style="font-size:23px;color:#4a4a4a;-webkit-text-stroke:0.6px #4a4a4a;letter-spacing:-0.2px;">16</span><span style="font-size:15.5px;letter-spacing:0.45px;"> / 16 Devices</span></div>
</div>
<!-- column settings tab -->
<div class="abs" style="left:1468px;top:152px;width:55px;height:45px;border-radius:23px 0 0 23px;background:#fff;box-shadow:2px 2px 4px rgba(0,0,0,0.13);">
  <svg class="abs" style="left:17px;top:10px" width="28" height="26" viewBox="0 0 28 26"><path d="M1 1 H27 V12 M1 1 V22 H14 M1 6 H27 M10 6 V22 M19 6 V10" fill="none" stroke="#777" stroke-width="1.7"/><g transform="translate(21.5,19.5)"><circle r="3.2" fill="none" stroke="#777" stroke-width="1.6"/><path d="M0 -5.6 V-3.6 M0 3.6 V5.6 M-5.6 0 H-3.6 M3.6 0 H5.6 M-4 -4 L-2.6 -2.6 M2.6 2.6 L4 4 M-4 4 L-2.6 2.6 M2.6 -2.6 L4 -4" stroke="#777" stroke-width="1.8"/></g></svg>
</div>
</body></html>
